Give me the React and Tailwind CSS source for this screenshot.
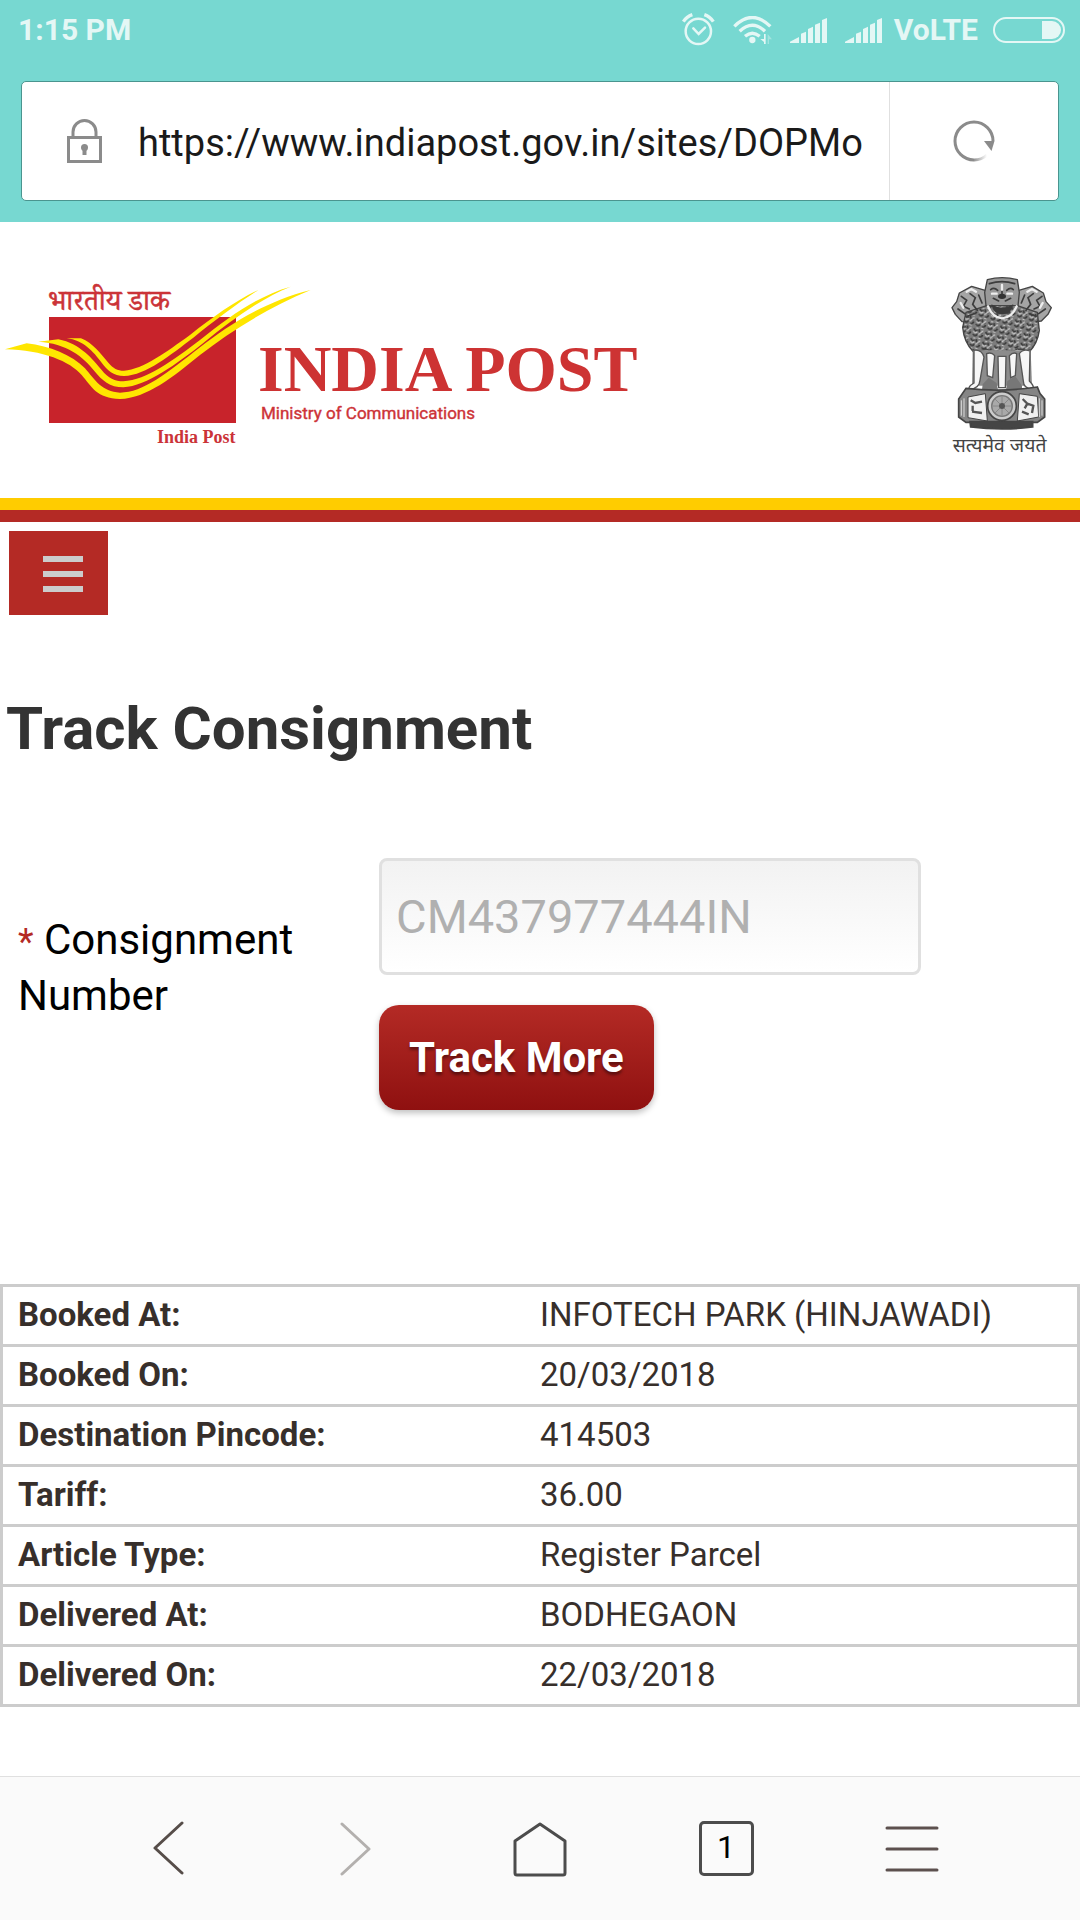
import React from "react";

const details = [
  ["Booked At:", "INFOTECH PARK (HINJAWADI)"],
  ["Booked On:", "20/03/2018"],
  ["Destination Pincode:", "414503"],
  ["Tariff:", "36.00"],
  ["Article Type:", "Register Parcel"],
  ["Delivered At:", "BODHEGAON"],
  ["Delivered On:", "22/03/2018"],
];

function AlarmIcon() {
  return (
    <svg width="33" height="34" viewBox="0 0 99 102" fill="none" stroke="currentColor" aria-hidden="true">
      <circle cx="49" cy="55" r="38" strokeWidth="7.5" />
      <path d="M34 46 L50 63 L69 44" strokeWidth="7.5" strokeLinecap="round" />
      <path d="M4 26 Q14 11 31 5" strokeWidth="10" />
      <path d="M94 26 Q84 11 67 5" strokeWidth="10" />
    </svg>
  );
}

function WifiIcon() {
  return (
    <svg width="39" height="28" viewBox="0 0 117 84" fill="none" stroke="currentColor" aria-hidden="true">
      <path d="M4 31 Q58 -22 112 31" strokeWidth="10" />
      <path d="M20 46 Q58 10 96 46" strokeWidth="10" />
      <path d="M36 61 Q58 42 80 61" strokeWidth="10" />
      <circle cx="58" cy="72" r="9.5" fill="currentColor" stroke="none" />
      <path d="M98 54 V84 H93 V78 L82 69 H93 V54 Z" fill="currentColor" stroke="none" />
      <path d="M104 84 V54 L117 70 H108 V84 Z" fill="currentColor" stroke="none" opacity="0.4" />
    </svg>
  );
}

function SignalIcon() {
  return (
    <svg width="37" height="25" viewBox="0 0 111 75" fill="currentColor" aria-hidden="true">
      <path d="M0 75 V71 L27 57 V75 Z M33 75 V47 L48 41 V75 Z M54 75 V33 L69 26 V75 Z M75 75 V20 L90 14 V75 Z M96 75 V6 L111 0 V75 Z" />
    </svg>
  );
}

function BatteryIcon() {
  return (
    <svg width="72" height="26" viewBox="0 0 72 26" aria-hidden="true">
      <rect x="1" y="1" width="70" height="24" rx="12" fill="none" stroke="currentColor" strokeWidth="2" />
      <path d="M49 4 H59 A9 9 0 0 1 59 22 H49 Z" fill="currentColor" />
    </svg>
  );
}

function LockIcon() {
  return (
    <svg width="35" height="44" viewBox="0 0 35 44" fill="none" stroke="#8b8b8b" strokeWidth="3" aria-hidden="true">
      <rect x="1.5" y="18.5" width="32" height="24" />
      <path d="M6 18 V13 A11.5 11.5 0 0 1 29 13 V18" />
      <circle cx="17.5" cy="28.5" r="3.5" fill="#8b8b8b" stroke="none" />
      <path d="M17.5 29 V36" strokeWidth="4" />
    </svg>
  );
}

function ReloadIcon() {
  return (
    <svg width="42" height="42" viewBox="0 0 42 42" fill="none" aria-hidden="true">
      <defs>
        <linearGradient id="reload-fade" x1="20" y1="0" x2="34" y2="0" gradientUnits="userSpaceOnUse">
          <stop offset="0" stopColor="#8b8b8b" />
          <stop offset="1" stopColor="#8b8b8b" stopOpacity="0" />
        </linearGradient>
      </defs>
      <path d="M21 40 A19 19 0 1 1 40 21" stroke="#8b8b8b" strokeWidth="3" />
      <path d="M21 40 A19 19 0 0 0 34 35" stroke="url(#reload-fade)" strokeWidth="3" />
      <path d="M31 21 H41.500 L38.500 31 Z" fill="#8b8b8b" />
    </svg>
  );
}

function IndiaPostLogo() {
  return (
    <svg width="640" height="180" viewBox="0 0 640 180" role="img" aria-label="India Post, Ministry of Communications">
      <text x="48" y="43" fill="#cb3338" stroke="#cb3338" strokeWidth="0.5" fontSize="28" fontFamily="'Noto Serif Devanagari', 'Noto Sans Devanagari', 'Noto Sans', sans-serif">
        भारतीय डाक
      </text>
      <rect x="49" y="50" width="187" height="106" fill="#c8232b" />
      <g fill="#ffe600" transform="translate(0 -7) scale(0.333333)">
        <path d="M15 268 L80 250 C150 258 215 285 255 325 C285 360 305 395 360 398 C430 398 500 340 600 262 C680 200 790 125 932 90 C800 145 690 215 600 285 C520 350 440 415 360 417 C290 415 275 380 245 345 C210 305 130 270 15 268 Z" />
        <path d="M115 245 L175 238 C240 250 280 300 305 330 C325 355 345 364 370 364 C440 360 520 300 600 240 C690 167 780 105 872 80 C790 112 700 175 610 249 C530 312 440 378 370 382 C330 382 305 360 285 335 C250 290 200 250 115 245 Z" />
        <path d="M200 235 L243 235 C280 250 300 280 325 308 C340 325 352 332 372 332 C430 328 500 275 570 225 C640 170 710 120 775 90 C715 128 645 180 580 233 C510 285 440 345 372 348 C340 348 322 330 305 308 C280 275 250 240 200 235 Z" />
      </g>
      <text x="157" y="176" fill="#cb3338" fontSize="18" fontWeight="700" fontFamily="'Liberation Serif', serif">India Post</text>
      <text x="258" y="124" fill="#cd3333" fontSize="66" fontWeight="700" fontFamily="'Liberation Serif', serif">INDIA POST</text>
      <text x="261" y="152" fill="#cd3338" stroke="#cd3338" strokeWidth="0.4" fontSize="17" fontFamily="Roboto, sans-serif">Ministry of Communications</text>
    </svg>
  );
}

function LionEmblem() {
  return (
    <svg width="104" height="186" viewBox="60 48 312 558" className="mt-2" role="img" aria-label="सत्यमेव जयते">
      <defs>
        <filter id="soft" x="-5%" y="-5%" width="110%" height="110%">
          <feGaussianBlur stdDeviation="2" />
        </filter>
        <pattern id="mane" width="37" height="31" patternUnits="userSpaceOnUse" patternTransform="rotate(17)">
          <rect width="37" height="31" fill="#7d7d7d" />
          <path d="M2 5 Q8 16 14 7 M18 3 Q20 14 30 12 M4 22 Q13 30 17 18 M23 27 Q31 25 33 17" fill="none" stroke="#3a3a3a" strokeWidth="5" />
          <path d="M3 13 Q9 21 15 12 M20 20 Q25 12 31 5 M9 2 L15 1 M22 29 L30 30" fill="none" stroke="#c4c4c4" strokeWidth="4" />
        </pattern>
      </defs>
      <g filter="url(#soft)">
        <g stroke="#444" strokeWidth="4" strokeLinejoin="round">
          <path d="M168 95 L125 82 L88 102 L80 128 L66 146 L76 166 L96 188 L135 190 L172 165 Z" fill="#a5a5a5" />
          <path d="M264 95 L307 82 L340 102 L348 128 L364 146 L354 166 L334 186 L296 190 L258 165 Z" fill="#a5a5a5" />
          <path d="M172 62 Q216 50 262 62 L268 100 L262 160 L170 160 L164 100 Z" fill="#999" />
          <path d="M108 160 L170 140 L262 140 L322 160 L328 215 Q322 255 298 278 L262 270 L214 292 L172 272 L130 278 Q102 250 98 205 Z" fill="url(#mane)" />
        </g>
        <g fill="none" stroke="#3d3d3d" strokeWidth="5" strokeLinecap="round">
          <path d="M94 112 l16 12 -10 18 18 8 M120 104 l16 12 -8 20 14 18 M84 150 l20 14 M112 172 l20 -8 M146 108 l10 24" />
          <path d="M336 112 l-16 12 10 18 -18 8 M310 104 l-16 12 8 20 -14 18 M346 150 l-20 14 M318 172 l-20 -8 M284 108 l-10 24" />
          <path d="M178 74 Q216 62 254 74 M182 92 Q192 84 203 94 M230 94 Q241 84 250 92 M216 82 V108 M190 118 l16 8 M242 118 l-16 8" />
        </g>
        <g fill="none" stroke="#eee" strokeWidth="7" strokeLinecap="round">
          <path d="M110 98 l14 -8 14 8 M292 98 l14 -8 14 8 M92 132 l8 14 M338 132 l-8 14" />
          <path d="M186 104 h14 M232 104 h14 M216 92 V78" />
          <path d="M174 142 Q188 176 216 178 Q246 176 260 142" />
        </g>
        <ellipse cx="216" cy="112" rx="12" ry="8" fill="#333" />
        <path d="M184 136 Q216 156 250 136 Q244 166 216 166 Q190 166 184 136 Z" fill="#3a3a3a" />
        <path d="M128 274 H302 L306 380 H126 Z" fill="#8c8c8c" />
        <g fill="#f6f6f6" stroke="#555" strokeWidth="4">
          <path d="M132 274 Q154 270 162 294 L150 364 Q148 388 118 392 Q112 384 132 372 Z" />
          <path d="M170 284 Q184 278 194 290 L188 356 L172 350 Z" />
          <path d="M204 292 H228 L226 386 H206 Z" />
          <path d="M238 290 Q250 278 260 284 L256 350 L242 356 Z" />
          <path d="M268 284 Q280 268 300 276 L298 366 Q316 384 308 392 Q280 388 280 366 Z" />
        </g>
        <path d="M158 376 L176 356 L200 372 L204 392 H156 Z M228 392 L232 366 L256 352 L276 380 V392 Z" fill="#777" />
        <g stroke="#444" strokeWidth="5">
          <path d="M108 388 Q216 400 322 384 L330 404 L344 420 V474 L322 490 H108 L86 474 V420 Z" fill="#858585" />
          <path d="M114 414 L166 404 L172 486 L114 476 Z M268 404 L322 412 L326 474 L262 486 Z" fill="#f0f0f0" strokeWidth="3" />
          <path d="M120 488 H308 V504 Q216 516 122 504 Z" fill="#444" />
        </g>
        <path d="M122 424 l14 8 20 -4 M126 458 l30 4 M128 440 v16 M278 420 l14 14 -8 14 M292 434 l18 6 -4 22 M276 458 l20 8" fill="none" stroke="#555" strokeWidth="7" />
        <circle cx="216" cy="441" r="43" fill="#ccc" stroke="#444" strokeWidth="5" />
        <circle cx="216" cy="441" r="31" fill="#a9a9a9" stroke="#777" strokeWidth="4" />
        <path d="M216 410 V472 M185 441 H247 M194 419 L238 463 M238 419 L194 463" stroke="#888" strokeWidth="3" />
        <circle cx="216" cy="441" r="9" fill="#555" />
        <path d="M94 424 v46 M102 418 v56 M336 424 v46 M328 418 v56" stroke="#ddd" strokeWidth="3" />
      </g>
      <text x="68" y="580" fill="#444" fontSize="58" fontFamily="'Noto Sans Devanagari', 'Noto Sans', sans-serif">
        सत्यमेव जयते
      </text>
    </svg>
  );
}

function NavButton({ label, children, disabled }) {
  return (
    <button type="button" aria-label={label} disabled={disabled} className="flex h-full flex-1 items-center justify-center">
      {children}
    </button>
  );
}

export default function App() {
  return (
    <div className="flex min-h-screen flex-col bg-white font-['Roboto',sans-serif]">
      <header className="bg-[#77d8d1]">
        <div className="flex h-[60px] items-center justify-between pr-[15px] pl-[18px] text-[30px] leading-none font-bold text-[#e4f7f5]">
          <span>1:15 PM</span>
          <div className="flex items-center">
            <AlarmIcon />
            <span className="ml-[18px]"><WifiIcon /></span>
            <span className="ml-[18px]"><SignalIcon /></span>
            <span className="ml-[18px]"><SignalIcon /></span>
            <span className="ml-3">VoLTE</span>
            <span className="ml-[15px]"><BatteryIcon /></span>
          </div>
        </div>
        <div className="px-[21px] py-[21px]">
          <div className="flex h-[120px] items-stretch rounded-[5px] border border-[#4a958f] bg-white">
            <div className="flex min-w-0 flex-1 items-center pl-[45px]">
              <LockIcon />
              <input
                aria-label="Address"
                defaultValue="https://www.indiapost.gov.in/sites/DOPMo"
                className="ml-[36px] min-w-0 flex-1 bg-transparent pt-1 text-[38px] text-[#1a1a1a] outline-none"
              />
            </div>
            <button type="button" aria-label="Reload" className="flex w-[169px] items-center justify-center border-l border-[#e0e0e0]">
              <ReloadIcon />
            </button>
          </div>
        </div>
      </header>

      <main className="flex-1">
        <div className="flex h-[276px] items-start justify-between pt-[45px] pr-[26px]">
          <IndiaPostLogo />
          <LionEmblem />
        </div>
        <div className="h-3 bg-[#ffcc00]" />
        <div className="h-3 bg-[#b42a25]" />

        <button type="button" aria-label="Menu" className="mt-[9px] ml-[9px] flex h-[84px] w-[99px] flex-col gap-[9px] bg-[#b42a25] pt-[25px] pl-[34px]">
          <span className="h-[6px] w-10 bg-[#ccc]" />
          <span className="h-[6px] w-10 bg-[#ccc]" />
          <span className="h-[6px] w-10 bg-[#ccc]" />
        </button>

        <h1 className="mt-[78px] ml-[6px] text-[60px] leading-[72px] font-bold text-[#333]">Track Consignment</h1>

        <form className="mt-[93px] flex items-start pl-[18px]" onSubmit={(e) => e.preventDefault()}>
          <label htmlFor="consignment" className="mt-[55px] w-[34%] pr-[50px] text-[42px] leading-[53px] text-black">
            <span className="text-[36px] text-[#b42a25]">*</span> <span>Consignment</span> <span>Number</span>
          </label>
          <div className="flex w-[51%] flex-col items-start gap-[30px]">
            <input
              id="consignment"
              disabled
              defaultValue="CM437977444IN"
              className="h-[117px] w-full rounded-[8px] border-3 border-[#e0e0e0] bg-linear-to-b from-[#f2f2f2] to-white px-[14px] text-[47px] text-[#b0b0b0]"
            />
            <button
              type="submit"
              className="h-[105px] rounded-[20px] bg-linear-to-b from-[#b42a25] to-[#8f1010] px-[30px] text-[42px] font-bold text-white shadow-[0_3px_6px_rgba(0,0,0,0.25)] text-shadow-[0_3px_3px_rgba(0,0,0,0.4)]"
            >
              Track More
            </button>
          </div>
        </form>

        <table className="mt-[174px] w-full table-fixed border-collapse border-3 border-[#ccc] text-left text-[33px] leading-[55px] text-[#372f2b]">
          <tbody>
            {details.map(([name, value]) => (
              <tr key={name} className="border-b-3 border-[#ccc]">
                <th scope="row" className="pt-0 pb-[2px] pl-[15px] font-bold">{name}</th>
                <td className="pt-0 pb-[2px]">{value}</td>
              </tr>
            ))}
          </tbody>
        </table>
      </main>

      <nav className="flex h-36 items-center border-t border-[#e0e0e0] bg-[#fafafa] px-[75px]">
        <NavButton label="Back">
          <svg width="34" height="56" viewBox="0 0 34 56" fill="none" stroke="#564d49" strokeWidth="3" strokeLinecap="round" strokeLinejoin="round">
            <path d="M31 2 L4 27 L31 52" />
          </svg>
        </NavButton>
        <NavButton label="Forward" disabled>
          <svg width="34" height="56" viewBox="0 0 34 56" fill="none" stroke="#b3b0ae" strokeWidth="3" strokeLinecap="round" strokeLinejoin="round">
            <path d="M5 3 L32 28 L5 53" />
          </svg>
        </NavButton>
        <NavButton label="Home">
          <svg width="54" height="56" viewBox="0 0 54 56" fill="none" stroke="#4c4c4c" strokeWidth="3" strokeLinejoin="round">
            <path d="M2 20 L27 3 L52 20 V52 Q52 54 50 54 H4 Q2 54 2 52 Z" />
          </svg>
        </NavButton>
        <NavButton label="Tabs">
          <span className="flex h-[55px] w-[55px] items-center justify-center rounded-[5px] border-3 border-[#4c4c4c] pb-1 text-[32px] leading-none text-black">1</span>
        </NavButton>
        <NavButton label="Menu">
          <svg width="54" height="48" viewBox="0 0 54 48" stroke="#5c504e" strokeWidth="3" strokeLinecap="round">
            <path d="M2 3 H52 M2 24 H52 M2 45 H52" />
          </svg>
        </NavButton>
      </nav>
    </div>
  );
}
